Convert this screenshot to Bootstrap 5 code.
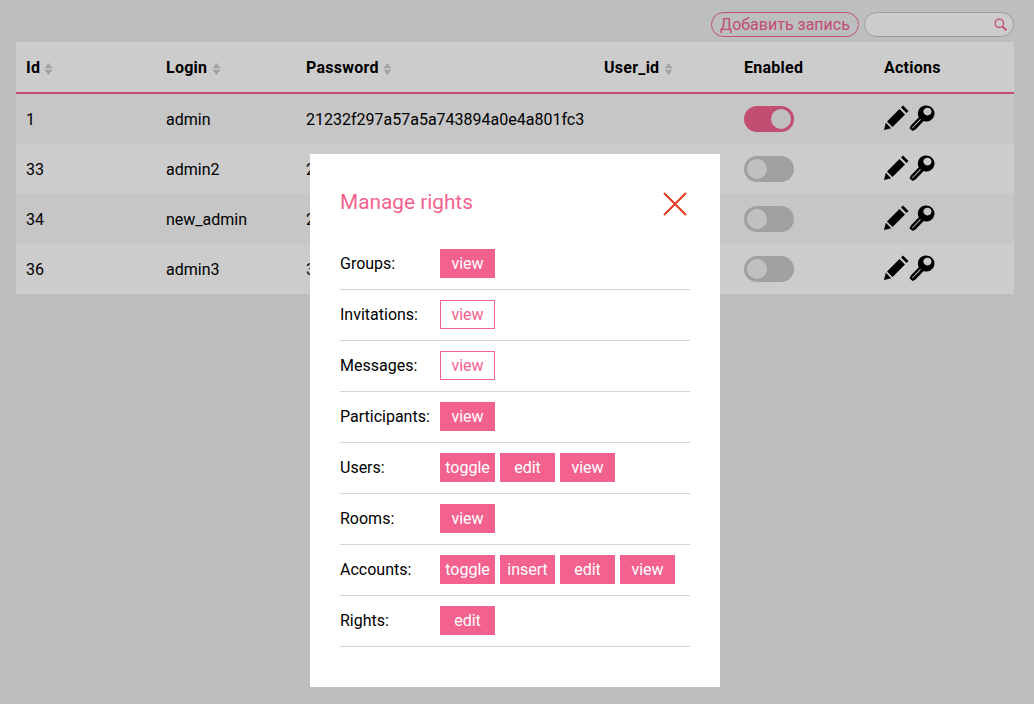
<!DOCTYPE html>
<html lang="en">
<head>
<meta charset="utf-8">
<title>Accounts</title>
<link href="https://cdn.jsdelivr.net/npm/bootstrap@5.3.0/dist/css/bootstrap.min.css" rel="stylesheet">
<style>
body{background:#eceef0;font-family:Roboto,"Liberation Sans",sans-serif;font-size:16px;color:#000;min-height:704px;padding:12px 20px 0 16px}
.top-bar{width:998px;gap:5px}
.add-pill{border:1px solid #f3628f;border-radius:13px;color:#f3628f;background:transparent;height:25px;width:148px;font-size:16px;line-height:23px;padding:0;text-align:center;white-space:nowrap}
.search-pill{width:150px;height:25px;border:1px solid #c4c4c4;border-radius:13px;background:#fff;padding:0 6px 0 8px}
.search-pill input{border:0;outline:0;background:transparent;min-width:0;flex:1;padding:0}
.grid-tbl{width:998px;table-layout:fixed;border-collapse:separate;border-spacing:0;margin-top:5px;background:#fff}
.grid-tbl th{height:52px;padding:2px 10px 0;font-weight:700;letter-spacing:.25px;border-bottom:2px solid #f3628f}
.grid-tbl td{height:50px;padding:2px 10px 0;white-space:nowrap;overflow:visible}
.grid-tbl tbody tr:nth-child(odd){background:#f8f8f8}
.col-w{width:140px}.col-p{width:298px}
.sort-mark{display:inline-block;vertical-align:-2px}
.sw-track{display:block;width:50px;height:26px;border-radius:13px;background:#c9c9c9;padding:3px;margin-top:-2px}
.sw-track.on{background:#f3628f}
.sw-knob{display:block;width:20px;height:20px;border-radius:50%;background:#f1f1f1}
.sw-track.on .sw-knob{margin-left:24px}
.act-set{display:flex;margin-top:-5px;margin-left:-1px}
.veil{position:fixed;inset:0;background:rgba(0,0,0,.2);display:flex;justify-content:center;align-items:flex-start;padding:154px 4px 0 0}
.dlg{width:410px;height:533px;background:#fff;padding:30px}
.dlg-title{font-size:20.8px;font-weight:400;color:#f3628f;margin:0;line-height:36px}
.dlg-x{width:24px;height:24px;margin:7px 3px 1px 0;padding:0;border:0;background:transparent;display:block}
.dlg-list{margin-top:19px}
.right-row{height:51px;border-bottom:1px solid #d5d5d5;padding-top:10px;display:flex}
.right-name{width:100px;line-height:29px}
.btn-set{display:flex;gap:5px}
.right-btn{width:55px;height:29px;line-height:27px;text-align:center;background:#f3628f;color:#fff;border:1px solid #f3628f;padding:0;font-size:16px;border-radius:0}
.right-btn.off{background:#fff;color:#f3628f}
</style>
</head>
<body>
<div class="top-bar d-flex justify-content-end">
  <button class="add-pill" type="button">Добавить запись</button>
  <div class="search-pill d-flex align-items-center">
    <input type="text" aria-label="search">
    <svg width="13" height="13" viewBox="0 0 13 13" fill="none" stroke="#f3628f"><circle cx="5.300" cy="5.300" r="4.200" stroke-width="1.300"/><path d="M8.400 8.400 12.300 12.300" stroke-width="2"/></svg>
  </div>
</div>
<svg width="0" height="0" class="d-block" aria-hidden="true"><defs>
<g id="ic-sort"><path d="M4.500 0 8.500 5.300H.5zM.5 6.700h8L4.500 12z"/></g>
<g id="ic-pen"><path d="M1 25 2.800 17.800 8.200 23.200zM4 16.500 16.500 4 22 9.500 9.500 22zM18 2.500 20 .5 25.500 6 23.500 8z"/></g>
<g id="ic-key"><path fill-rule="evenodd" d="M17.500.5a8 8 0 1 1-2.800 15.500L6.500 24.500 3.500 26 .5 23.300 1.800 20.500 9.800 12.200A8 8 0 0 1 17.500.5zM18.700 2.800c-2.300 0-4.400 1.500-4.400 3.600 0 2.200 2.200 4 4.400 4s3.800-1.800 3.800-3.800-1.500-3.800-3.800-3.800zM3 22.700l.6.6 8.200-8.600-.6-.6z"/></g>
</defs></svg>
<table class="grid-tbl">
<colgroup><col class="col-w"><col class="col-w"><col class="col-p"><col class="col-w"><col class="col-w"><col class="col-w"></colgroup>
<thead><tr>
<th>Id <svg class="sort-mark" width="9" height="12" viewBox="0 0 9 12" fill="#cbcbcb"><use href="#ic-sort"/></svg></th>
<th>Login <svg class="sort-mark" width="9" height="12" viewBox="0 0 9 12" fill="#cbcbcb"><use href="#ic-sort"/></svg></th>
<th>Password <svg class="sort-mark" width="9" height="12" viewBox="0 0 9 12" fill="#cbcbcb"><use href="#ic-sort"/></svg></th>
<th>User_id <svg class="sort-mark" width="9" height="12" viewBox="0 0 9 12" fill="#cbcbcb"><use href="#ic-sort"/></svg></th>
<th>Enabled</th>
<th>Actions</th>
</tr></thead>
<tbody>
<tr><td>1</td><td>admin</td><td>21232f297a57a5a743894a0e4a801fc3</td><td></td><td><span class="sw-track on"><span class="sw-knob"></span></span></td><td><div class="act-set"><svg width="26" height="26" viewBox="0 0 26 26"><use href="#ic-pen"/></svg><svg width="26" height="26" viewBox="0 0 26 26"><use href="#ic-key"/></svg></div></td></tr>
<tr><td>33</td><td>admin2</td><td>21232f297a57a5a743894a0e4a801fc3</td><td></td><td><span class="sw-track"><span class="sw-knob"></span></span></td><td><div class="act-set"><svg width="26" height="26" viewBox="0 0 26 26"><use href="#ic-pen"/></svg><svg width="26" height="26" viewBox="0 0 26 26"><use href="#ic-key"/></svg></div></td></tr>
<tr><td>34</td><td>new_admin</td><td>21232f297a57a5a743894a0e4a801fc3</td><td></td><td><span class="sw-track"><span class="sw-knob"></span></span></td><td><div class="act-set"><svg width="26" height="26" viewBox="0 0 26 26"><use href="#ic-pen"/></svg><svg width="26" height="26" viewBox="0 0 26 26"><use href="#ic-key"/></svg></div></td></tr>
<tr><td>36</td><td>admin3</td><td>32cc5886dc1fa8c106a02056d5c5b3c9</td><td></td><td><span class="sw-track"><span class="sw-knob"></span></span></td><td><div class="act-set"><svg width="26" height="26" viewBox="0 0 26 26"><use href="#ic-pen"/></svg><svg width="26" height="26" viewBox="0 0 26 26"><use href="#ic-key"/></svg></div></td></tr>
</tbody>
</table>
<div class="veil">
  <div class="dlg">
    <div class="d-flex justify-content-between align-items-start">
      <h5 class="dlg-title">Manage rights</h5>
      <button class="dlg-x" type="button" aria-label="Close"><svg width="24" height="24" viewBox="0 0 24 24" stroke="#e8371f" stroke-width="2" fill="none"><path d="M1 1 23 23M23 1 1 23"/></svg></button>
    </div>
    <div class="dlg-list">
      <div class="right-row"><div class="right-name">Groups:</div><div class="btn-set"><button class="right-btn">view</button></div></div>
      <div class="right-row"><div class="right-name">Invitations:</div><div class="btn-set"><button class="right-btn off">view</button></div></div>
      <div class="right-row"><div class="right-name">Messages:</div><div class="btn-set"><button class="right-btn off">view</button></div></div>
      <div class="right-row"><div class="right-name">Participants:</div><div class="btn-set"><button class="right-btn">view</button></div></div>
      <div class="right-row"><div class="right-name">Users:</div><div class="btn-set"><button class="right-btn">toggle</button><button class="right-btn">edit</button><button class="right-btn">view</button></div></div>
      <div class="right-row"><div class="right-name">Rooms:</div><div class="btn-set"><button class="right-btn">view</button></div></div>
      <div class="right-row"><div class="right-name">Accounts:</div><div class="btn-set"><button class="right-btn">toggle</button><button class="right-btn">insert</button><button class="right-btn">edit</button><button class="right-btn">view</button></div></div>
      <div class="right-row"><div class="right-name">Rights:</div><div class="btn-set"><button class="right-btn">edit</button></div></div>
    </div>
  </div>
</div>
<script src="https://cdn.jsdelivr.net/npm/bootstrap@5.3.0/dist/js/bootstrap.bundle.min.js"></script>
</body>
</html>
